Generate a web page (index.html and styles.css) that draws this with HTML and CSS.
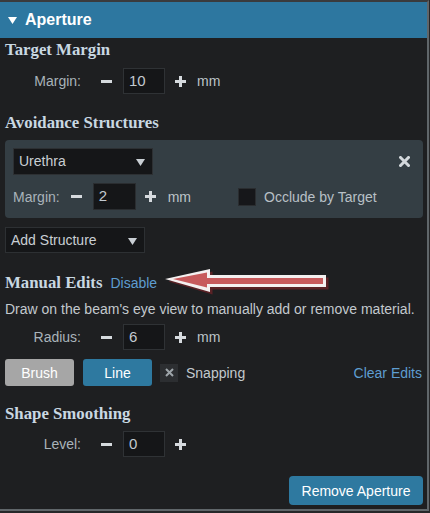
FILE: index.html
```html
<!DOCTYPE html>
<html>
<head>
<meta charset="utf-8">
<link rel="stylesheet" href="styles.css">
</head>
<body>
<div class="panel">
  <div class="header">
    <svg class="caret" width="9" height="7" viewBox="0 0 9 7"><polygon points="0,0 9,0 4.5,7" fill="#fff"/></svg>
    <span>Aperture</span>
  </div>
  <div class="content">
    <h3 class="heading first">Target Margin</h3>
    <div class="field-row">
      <span class="label wide">Margin:</span>
      <span class="step"><svg width="11" height="11" viewBox="0 0 11 11"><rect x="0" y="4" width="11" height="3" fill="#d6dade"/></svg></span>
      <span class="num">10</span>
      <span class="step"><svg width="11" height="11" viewBox="0 0 11 11"><rect x="0" y="4" width="11" height="3" fill="#d6dade"/><rect x="4" y="0" width="3" height="11" fill="#d6dade"/></svg></span>
      <span class="unit">mm</span>
    </div>

    <h3 class="heading avoid">Avoidance Structures</h3>
    <div class="card">
      <div class="card-row">
        <div class="select">Urethra<svg class="sel-arrow" width="9" height="7" viewBox="0 0 9 7"><polygon points="0,0 9,0 4.5,7" fill="#c9cfd4"/></svg></div>
        <svg class="close" width="11" height="11" viewBox="0 0 11 11"><path d="M1.5 1.5 L9.5 9.5 M9.5 1.5 L1.5 9.5" stroke="#d3d8dc" stroke-width="3" stroke-linecap="square"/></svg>
      </div>
      <div class="card-row second">
        <span class="label">Margin:</span>
        <span class="step"><svg width="11" height="11" viewBox="0 0 11 11"><rect x="0" y="4" width="11" height="3" fill="#d6dade"/></svg></span>
        <span class="num card-num">2</span>
        <span class="step"><svg width="11" height="11" viewBox="0 0 11 11"><rect x="0" y="4" width="11" height="3" fill="#d6dade"/><rect x="4" y="0" width="3" height="11" fill="#d6dade"/></svg></span>
        <span class="unit">mm</span>
        <span class="checkbox occlude"></span>
        <span class="check-label">Occlude by Target</span>
      </div>
    </div>
    <div class="select add">Add Structure<svg class="sel-arrow" width="9" height="7" viewBox="0 0 9 7"><polygon points="0,0 9,0 4.5,7" fill="#c9cfd4"/></svg></div>

    <div class="heading-row">
      <h3 class="heading inline">Manual Edits</h3>
      <span class="link disable">Disable</span>
    </div>
    <p class="desc">Draw on the beam's eye view to manually add or remove material.</p>
    <div class="field-row radius">
      <span class="label wide">Radius:</span>
      <span class="step"><svg width="11" height="11" viewBox="0 0 11 11"><rect x="0" y="4" width="11" height="3" fill="#d6dade"/></svg></span>
      <span class="num">6</span>
      <span class="step"><svg width="11" height="11" viewBox="0 0 11 11"><rect x="0" y="4" width="11" height="3" fill="#d6dade"/><rect x="4" y="0" width="3" height="11" fill="#d6dade"/></svg></span>
      <span class="unit">mm</span>
    </div>
    <div class="tool-row">
      <span class="btn brush">Brush</span>
      <span class="btn line">Line</span>
      <span class="checkbox snap"><svg width="9" height="9" viewBox="0 0 9 9"><path d="M1 1 L8 8 M8 1 L1 8" stroke="#9ea5aa" stroke-width="2"/></svg></span>
      <span class="check-label">Snapping</span>
      <span class="link clear">Clear Edits</span>
    </div>

    <h3 class="heading smooth">Shape Smoothing</h3>
    <div class="field-row level">
      <span class="label wide">Level:</span>
      <span class="step"><svg width="11" height="11" viewBox="0 0 11 11"><rect x="0" y="4" width="11" height="3" fill="#d6dade"/></svg></span>
      <span class="num">0</span>
      <span class="step"><svg width="11" height="11" viewBox="0 0 11 11"><rect x="0" y="4" width="11" height="3" fill="#d6dade"/><rect x="4" y="0" width="3" height="11" fill="#d6dade"/></svg></span>
    </div>
    <div class="footer">
      <span class="btn remove">Remove Aperture</span>
    </div>
  </div>

  <svg class="annot-arrow" width="168" height="30" viewBox="0 0 168 30">
    <polygon points="4,15 48,5 48,11 164,11 164,23 48,23 48,28" fill="#5a2226" transform="translate(1.5,1.5)"/>
    <polygon points="2,14 47,4 47,10 163,10 163,22 47,22 47,27" fill="#f4f0f0"/>
    <polygon points="10,14 44,7.5 44,13 160,13 160,19 44,19 44,22.5" fill="#c75a5c"/>
  </svg>
</div>
</body>
</html>
```

FILE: styles.css
```css
body {
  margin: 0;
  background: #262729;
  font-family: "Liberation Sans", Arial, sans-serif;
  font-size: 14px;
}

.panel {
  position: relative;
  width: 429px;
  height: 511px;
  box-sizing: border-box;
  border-top: 2px solid #3a3b3d;
  border-right: 2px solid #60666a;
  border-bottom: 2px solid #60666a;
  background: #1e1f21;
  display: flex;
  flex-direction: column;
}

.header {
  height: 36px;
  background: #2d77a0;
  color: #fff;
  font-weight: bold;
  font-size: 16px;
  display: flex;
  align-items: center;
  padding-left: 8px;
}

.caret {
  margin-right: 8px;
  margin-top: 1px;
}

.content {
  padding: 0 4px 0 5px;
  display: flex;
  flex-direction: column;
}

.heading {
  margin: 0;
  font-family: "Liberation Serif", "Times New Roman", serif;
  font-weight: bold;
  font-size: 16.8px;
  line-height: 20px;
  height: 20px;
  color: #c9d8e2;
}

.heading.first { margin-top: 2px; }
.heading.avoid { margin-top: 19px; }
.heading.smooth { margin-top: 18px; }

.field-row {
  display: flex;
  align-items: center;
  height: 26px;
  margin-top: 8px;
}

.field-row.radius { margin-top: 6px; }
.field-row.level { margin-top: 7px; }

.label {
  color: #a9b3ba;
}

.label.wide {
  width: 76px;
  text-align: right;
  margin-right: 10px;
}

.step {
  width: 30px;
  display: flex;
  justify-content: center;
  align-items: center;
}

.step svg { display: block; }

.num {
  width: 42px;
  height: 26px;
  box-sizing: border-box;
  margin-left: 2px;
  border: 1px solid #2f3235;
  background: #151618;
  color: #c3cad0;
  font-size: 15px;
  line-height: 23px;
  padding-left: 5px;
}

.num.card-num {
  width: 43px;
  height: 27px;
  margin-left: 1px;
  border-color: #2a2d30;
}

.unit {
  margin-left: 2px;
  color: #bcc3c8;
}

.card {
  margin-top: 7px;
  background: #343e44;
  border-radius: 4px;
  padding: 8px;
}

.card-row {
  display: flex;
  align-items: center;
}

.card-row.second {
  margin-top: 8px;
  height: 27px;
}

.card-row .label {
  margin-right: 2px;
}

.select {
  position: relative;
  width: 140px;
  height: 27px;
  box-sizing: border-box;
  background: #151618;
  border: 1px solid #2d3033;
  color: #c9cfd4;
  padding-left: 5px;
  line-height: 25px;
  font-size: 14px;
}

.sel-arrow {
  position: absolute;
  right: 7px;
  top: 10px;
}

.close {
  margin-left: auto;
  margin-right: 5px;
  margin-top: -1px;
}

.checkbox {
  width: 18px;
  height: 18px;
  box-sizing: border-box;
  background: #16171a;
  border: 1px solid #2a2d30;
  display: flex;
  align-items: center;
  justify-content: center;
}

.checkbox.occlude { margin-left: 47px; }

.check-label {
  margin-left: 8px;
  color: #b8c0c6;
}

.select.add {
  margin-top: 9px;
  height: 26px;
  line-height: 24px;
}

.heading-row {
  display: flex;
  align-items: baseline;
  margin-top: 20px;
  height: 20px;
}

.heading.inline { margin: 0; }

.link {
  color: #5e9dd0;
}

.disable {
  margin-left: 8px;
}

.desc {
  margin: 7px 0 0;
  line-height: 18px;
  color: #c3c9ce;
}

.tool-row {
  display: flex;
  align-items: center;
  margin-top: 9px;
  height: 27px;
}

.btn {
  height: 27px;
  width: 69px;
  border-radius: 3px;
  color: #fff;
  font-size: 14px;
  display: flex;
  align-items: center;
  justify-content: center;
}

.brush { background: #a6a6a6; }
.line { background: #2e79a0; margin-left: 9px; }

.checkbox.snap {
  margin-left: 8px;
  background: #2c2e31;
  border-color: #2c2e31;
}

.tool-row .check-label { color: #c3c9ce; }

.clear {
  margin-left: auto;
  margin-right: 1px;
}

.footer {
  display: flex;
  justify-content: flex-end;
  margin-top: 19px;
}

.btn.remove {
  width: 134px;
  height: 29px;
  background: #2e79a0;
  border-radius: 4px;
}

.annot-arrow {
  position: absolute;
  left: 163px;
  top: 263px;
}
```
